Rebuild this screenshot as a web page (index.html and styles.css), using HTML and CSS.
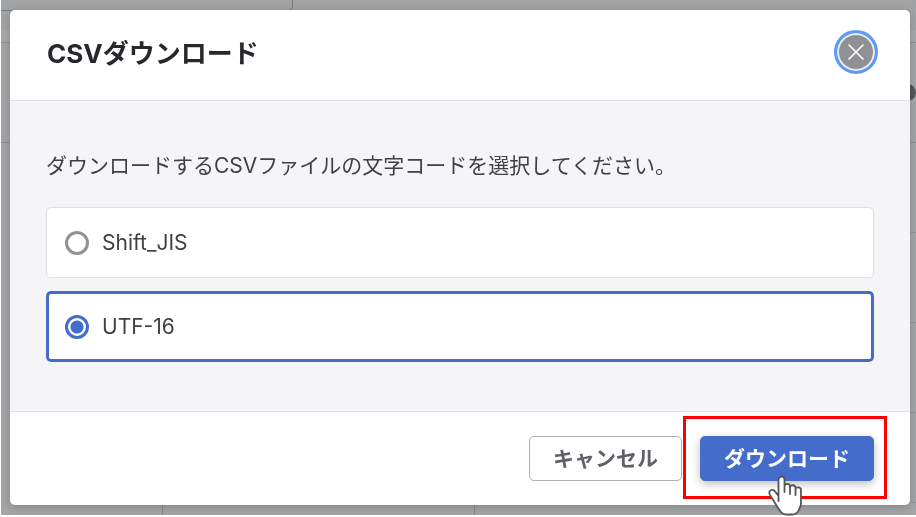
FILE: index.html
```html
<!DOCTYPE html>
<html lang="ja">

<head>
    <meta charset="UTF-8">
    <meta name="viewport" content="width=device-width, initial-scale=1.0">
    <title>CSVダウンロード</title>
    <link rel="stylesheet" href="styles.css">
</head>

<body>
    <!-- 背景の一覧画面 -->
    <div class="page" aria-hidden="true">
        <div class="filter">
            <div class="filter-box"></div>
        </div>
        <div class="spacer"></div>
        <div class="list-head">
            <span class="knob"></span>
        </div>
        <div class="list">
            <div class="col col-name"></div>
            <div class="col col-detail"></div>
            <div class="col col-rest"></div>
            <div class="col-action">
                <div class="cell"></div>
                <div class="cell"></div>
                <div class="cell"></div>
                <div class="cell"></div>
            </div>
        </div>
    </div>

    <!-- モーダル -->
    <div class="overlay">
        <form class="modal" role="dialog" aria-labelledby="modal-title">
            <div class="modal-header">
                <h2 id="modal-title">CSVダウンロード</h2>
                <button type="button" class="close" aria-label="閉じる">
                    <svg width="18" height="18" viewBox="0 0 18 18">
                        <path d="M2 2L16 16M16 2L2 16" stroke="#fff" stroke-width="1.6" stroke-linecap="round" />
                    </svg>
                </button>
            </div>
            <div class="modal-body">
                <p>ダウンロードするCSVファイルの文字コードを選択してください。</p>
                <label class="option">
                    <input type="radio" name="encoding" value="sjis">
                    <span>Shift_JIS</span>
                </label>
                <label class="option">
                    <input type="radio" name="encoding" value="utf16" checked>
                    <span>UTF-16</span>
                </label>
            </div>
            <div class="modal-footer">
                <button type="button" class="btn">キャンセル</button>
                <div class="target">
                    <button type="button" class="btn btn-primary">ダウンロード</button>
                    <span class="mark"></span>
                    <svg class="pointer" width="36" height="42" viewBox="0 0 36 42">
                        <path d="M10.5 26V5C10.5 .6 16.5 .6 16.5 5V17V11.5C16.5 8 22 8 22 11.5V19V12.5C22 9.300 27.500 9.500 27.500 13V20V14.500C27.500 11.500 33 11.500 33 15V28C33 31 32 32.500 31 34.500C29.500 38.500 27.500 39.500 24 39.500H18C14 39.500 12.500 37 11 34.500L2 20C-.5 15.500 4.500 13 7.500 17L10.500 21Z" fill="#fff" stroke="#555" stroke-width="1.8" stroke-linejoin="round" />
                    </svg>
                </div>
            </div>
        </form>
    </div>
</body>

</html>
```

FILE: styles.css
```css
* {
    box-sizing: border-box;
    margin: 0;
    padding: 0;
}

body {
    display: flex;
    min-height: 100vh;
    padding: 0 0 2px 1px;
    background-color: #fff;
    color: #3f4145;
    font-family: Inter, "Noto Sans CJK JP", sans-serif;
    font-size: 21px;
    line-height: 30px;
    overflow: hidden;
}

/* 背景 */
.page {
    display: flex;
    flex: 1;
    flex-direction: column;
    background-color: #a4a5a7;
}

.filter {
    height: 30px;
    background-color: #a2a3a5;
}

.filter-box {
    width: 292px;
    height: 11px;
    border: 1px solid #77787a;
    border-top: 0;
    border-left: 0;
    border-radius: 0 0 5px 0;
}

.spacer {
    height: 13px;
    background-color: #a8a9ab;
    border-bottom: 1px solid #8e8f91;
}

.list-head {
    display: flex;
    align-items: center;
    justify-content: flex-end;
    height: 100px;
    border-bottom: 1px solid #8e8f91;
}

.knob {
    width: 17px;
    height: 17px;
    border-radius: 50%;
    background-color: #55565c;
}

.list {
    display: flex;
    flex: 1;
}

.col {
    border-right: 1px solid #898a8c;
}

.col-name {
    width: 162px;
}

.col-detail {
    width: 312px;
}

.col-rest {
    flex: 1;
    border: 0;
}

.col-action {
    width: 60px;
}

.cell {
    height: 90px;
    border-bottom: 1px solid #949597;
}

/* モーダル */
.overlay {
    position: fixed;
    inset: 0;
    padding: 10px 6px 12px 10px;
}

.modal {
    border-radius: 5px;
    background-color: #fff;
    box-shadow: 0 2px 10px rgba(0, 0, 0, .2);
}

.modal-header {
    display: flex;
    align-items: center;
    justify-content: space-between;
    height: 91px;
    padding: 0 32px 6px 37px;
    border-bottom: 1px solid #dfe0e3;
}

.modal-header h2 {
    padding-top: 4px;
    color: #26282c;
    font-size: 26px;
    font-weight: 700;
    line-height: 40px;
}

.close {
    display: flex;
    align-items: center;
    justify-content: center;
    width: 44px;
    height: 44px;
    border: 3px solid #5b9df5;
    border-radius: 50%;
    background-color: #919195;
    box-shadow: inset 0 0 0 2px #e8edf6;
}

.modal-body {
    padding: 50px 36px 49px;
    background-color: #f5f5f8;
}

.modal-body p {
    margin-bottom: 26px;
}

.option {
    display: flex;
    align-items: center;
    gap: 13px;
    height: 71px;
    padding: 0 18px;
    border: 1px solid #dfe0e3;
    border-radius: 5px;
    background-color: #fff;
}

.option + .option {
    margin-top: 13px;
}

.option:has(input:checked) {
    padding: 0 16px;
    border: 3px solid #446ccb;
}

.option input {
    width: 24px;
    height: 24px;
    border: 3px solid #929296;
    border-radius: 50%;
    background-color: #fff;
    appearance: none;
}

.option input:checked {
    border-color: #446ccb;
    background-image: radial-gradient(circle, #446ccb 6px, transparent 7px);
}

.modal-footer {
    display: flex;
    justify-content: flex-end;
    gap: 18px;
    padding: 24px 36px;
    border-top: 1px solid #dfe0e3;
    border-radius: 0 0 5px 5px;
}

.btn {
    display: block;
    height: 45px;
    padding: 0 23px;
    border: 1px solid #b0b1b4;
    border-radius: 5px;
    background-color: #fff;
    color: #606167;
    font: inherit;
    font-weight: 700;
}

.btn-primary {
    border-color: #446ccb;
    background-color: #446ccb;
    color: #fff;
    box-shadow: 0 3px 10px rgba(0, 0, 0, .25);
}

/* 操作箇所の強調枠 */
.target {
    position: relative;
}

.mark {
    position: absolute;
    inset: -20px -13px -18px -17px;
    border: 3px solid #f00;
    pointer-events: none;
}

.pointer {
    position: absolute;
    top: 39px;
    left: 68px;
    pointer-events: none;
}
```
